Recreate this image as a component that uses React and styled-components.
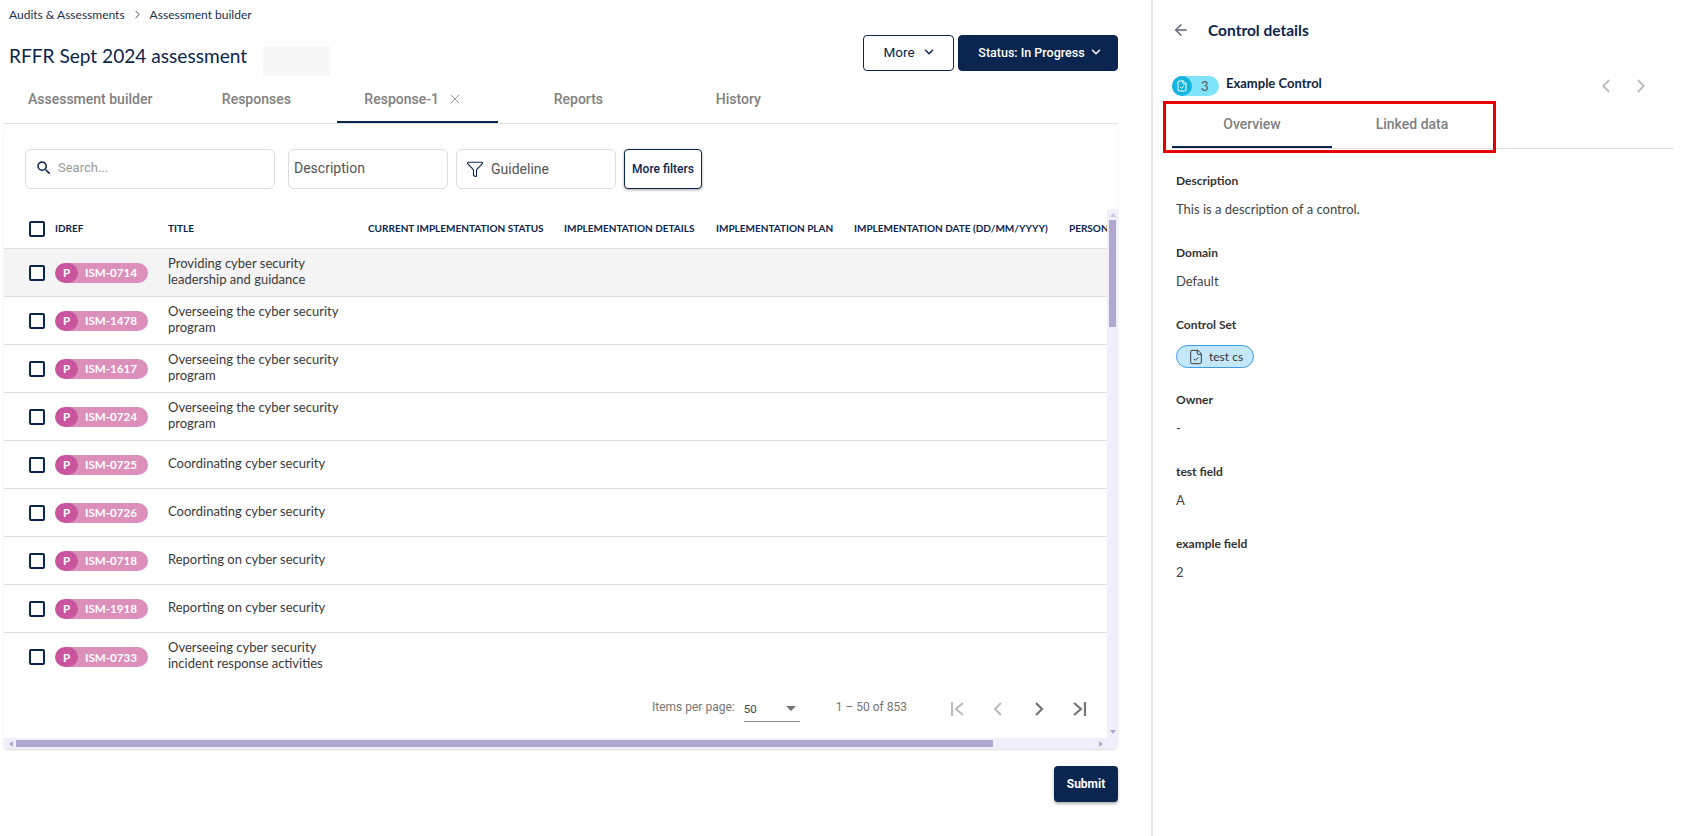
import React from "react";
import styled, { createGlobalStyle } from "styled-components";
import { ChevronRight, ChevronLeft, ChevronDown, X, ArrowLeft, Funnel, FileCheck } from "lucide-react";

const navy = "#0a2550";

const Global = createGlobalStyle`
  html, body { margin: 0; padding: 0; height: 100%; background: #fff; overflow: hidden; }
  body { font-family: Lato, "Liberation Sans", sans-serif; color: #333; }
  * { box-sizing: border-box; }
`;

const Page = styled.div`
  display: flex;
  width: 1689px;
  height: 836px;
  overflow: hidden;
`;
const Main = styled.main`
  width: 1151px;
  flex: none;
  padding: 0 33px 0 4px;
`;
const Breadcrumb = styled.nav`
  height: 28px;
  display: flex;
  align-items: center;
  gap: 6px;
  padding-left: 5px;
  font-size: 12px;
  color: #1c2f4f;
`;
const HeadRow = styled.div`
  height: 48px;
  display: flex;
  justify-content: space-between;
  align-items: flex-start;
`;
const TitleGroup = styled.div`
  display: flex;
  align-items: flex-start;
  gap: 16px;
  margin-top: 17px;
  padding-left: 5px;
`;
const Title = styled.h1`
  margin: 0;
  font-size: 19.1px;
  line-height: 22px;
  font-weight: 400;
  color: ${navy};
  white-space: nowrap;
`;
const Blank = styled.div`
  width: 67px;
  height: 30px;
  margin-top: 1px;
  background: #f7f7f7;
`;
const Actions = styled.div`
  display: flex;
  gap: 4px;
  margin-top: 7px;
`;
const HeadButton = styled.button`
  height: 36px;
  width: ${(p) => p.$w}px;
  display: flex;
  align-items: center;
  justify-content: center;
  gap: ${(p) => (p.$primary ? 4 : 7)}px;
  border: 1px solid ${navy};
  border-radius: 4px;
  background: ${(p) => (p.$primary ? navy : "#fff")};
  color: ${(p) => (p.$primary ? "#fff" : navy)};
  font-family: Roboto, sans-serif;
  font-size: ${(p) => (p.$primary ? 12.5 : 13.5)}px;
  font-weight: ${(p) => (p.$primary ? 500 : 400)};
  padding: 0 0 2px ${(p) => (p.$primary ? 5 : 2)}px;
`;
const TabBar = styled.div`
  display: flex;
  height: 48px;
  border-bottom: 1px solid #e0e0e0;
`;
const Tab = styled.div`
  min-width: ${(p) => p.$w || 160}px;
  height: 100%;
  padding: 0 24px 0 ${(p) => p.$pl || 24}px;
  margin-right: ${(p) => p.$mr || 0}px;
  display: flex;
  align-items: center;
  justify-content: ${(p) => (p.$start ? "flex-start" : "center")};
  gap: 8px;
  font-family: Roboto, sans-serif;
  font-size: 14px;
  font-weight: 500;
  color: #808080;
  white-space: nowrap;
  border-bottom: 2px solid ${(p) => (p.$active ? navy : "transparent")};
  margin-bottom: -1px;
`;
const Card = styled.section`
  margin-top: 4px;
  height: 621px;
  display: flex;
  flex-direction: column;
  border-radius: 4px;
  box-shadow: 0 1px 2px rgba(0, 0, 0, 0.14);
  overflow: hidden;
  background: #fff;
`;
const Toolbar = styled.div`
  flex: none;
  height: 81px;
  padding: 21px 0 0 21px;
  display: flex;
  gap: 8px;
`;
const Field = styled.div`
  width: ${(p) => p.$w}px;
  height: 40px;
  margin-right: ${(p) => p.$mr || 0}px;
  display: flex;
  align-items: center;
  gap: ${(p) => p.$gap || 0}px;
  padding-left: ${(p) => p.$pl}px;
  padding-bottom: ${(p) => p.$pb || 0}px;
  border: 1px solid #dcdcdc;
  border-radius: 6px;
  font-family: Roboto, sans-serif;
  font-size: ${(p) => p.$fs || 14}px;
  color: ${(p) => p.$color || "#555"};
`;
const FilterButton = styled.button`
  width: 78px;
  height: 40px;
  padding: 0;
  border: 1px solid ${navy};
  border-radius: 4px;
  background: #fff;
  color: ${navy};
  font-family: Roboto, sans-serif;
  font-size: 12px;
  font-weight: 500;
  box-shadow: 0 1px 3px rgba(0, 0, 0, 0.35);
`;
const TableArea = styled.div`
  flex: 1;
  min-height: 0;
  display: flex;
`;
const TableColumn = styled.div`
  flex: 1;
  min-width: 0;
  overflow: hidden;
`;
const Row = styled.div`
  display: grid;
  grid-template-columns: 51px 113px 200px 196px 152px 138px 215px 200px;
  align-items: center;
  height: ${(p) => p.$h || 48}px;
  border-bottom: 1px solid #e0e0e0;
  background: ${(p) => (p.$hl ? "#f4f4f4" : "#fff")};
  ${(p) => (p.$last ? "border-bottom: 0;" : "")}
`;
const HeadCell = styled.div`
  font-size: 10px;
  font-weight: 700;
  color: ${navy};
  white-space: nowrap;
  overflow: hidden;
  padding-bottom: 2px;
`;
const CheckCell = styled.div`
  padding-left: 25px;
  display: flex;
`;
const Check = styled.span`
  width: 16px;
  height: 16px;
  border: 2px solid ${navy};
  border-radius: 2px;
  background: #fff;
`;
const IdPill = styled.span`
  width: 93px;
  height: 20px;
  display: flex;
  align-items: center;
  border-radius: 10px;
  background: #dc8fbb;
  color: #fff;
  font-size: 11.6px;
  font-weight: 700;
  overflow: hidden;
`;
const IdDot = styled.span`
  width: 23px;
  height: 20px;
  margin-right: 7px;
  border-radius: 10px;
  background: #c9559e;
  display: flex;
  align-items: center;
  justify-content: center;
`;
const RowTitle = styled.div`
  font-size: 13px;
  line-height: 16px;
  color: #3a3a3a;
  padding-bottom: 4px;
`;
const Pagination = styled.div`
  height: 55px;
  display: flex;
  align-items: center;
  padding: 0 0 3px 648px;
  font-family: Roboto, sans-serif;
  font-size: 12px;
  color: #757575;
`;
const PageSize = styled.div`
  width: 56px;
  height: 26px;
  margin: 4px 36px 0 9px;
  display: flex;
  align-items: center;
  justify-content: space-between;
  padding-right: 4px;
  border-bottom: 1px solid #8c8c8c;
  color: #444;
  font-size: 11.5px;
`;
const Caret = styled.span`
  width: 0;
  height: 0;
  border-left: 5px solid transparent;
  border-right: 5px solid transparent;
  border-top: 5px solid #757575;
`;
const Range = styled.span`
  width: 109px;
  flex: none;
`;
const PageButtons = styled.div`
  display: flex;
  align-items: center;
  gap: 17px;
  margin-top: 4px;
`;
const VBar = styled.div`
  position: relative;
  flex: none;
  width: 11px;
  height: 529px;
  align-self: flex-end;
  background: #f1effb;
`;
const VThumb = styled.div`
  width: 7px;
  height: 107px;
  margin: 11px 0 0 2px;
  background: #b0a8d0;
`;
const ScrollArrow = styled.span`
  position: absolute;
  width: 0;
  height: 0;
  ${(p) => p.$css}
`;
const HBar = styled.div`
  position: relative;
  flex: none;
  height: 11px;
  padding: 2px 125px 2px 12px;
  background: #f1effb;
`;
const HThumb = styled.div`
  height: 7px;
  background: #b0a8d0;
`;
const Footer = styled.div`
  display: flex;
  justify-content: flex-end;
  margin-top: 17px;
`;
const Submit = styled.button`
  width: 64px;
  height: 36px;
  padding: 0;
  border: 0;
  border-radius: 4px;
  background: ${navy};
  color: #fff;
  font-family: Roboto, sans-serif;
  font-size: 12px;
  font-weight: 700;
  box-shadow: 0 2px 3px rgba(0, 0, 0, 0.3);
`;
const Side = styled.aside`
  flex: 1;
  border-left: 2px solid #e6e6e6;
  padding: 0 15px 0 19px;
`;
const SideHead = styled.div`
  height: 60px;
  display: flex;
  align-items: center;
  gap: 18px;
`;
const SideTitle = styled.h2`
  margin: 0;
  font-size: 15.5px;
  font-weight: 700;
  color: ${navy};
`;
const ControlRow = styled.div`
  height: 41px;
  display: flex;
  align-items: center;
  padding: 10px 22px 0 0;
`;
const ControlBadge = styled.span`
  width: 47px;
  height: 20px;
  display: flex;
  align-items: center;
  border-radius: 10px;
  background: #7ee3fb;
  font-size: 13px;
  color: #555;
`;
const ControlDot = styled.span`
  width: 20px;
  height: 20px;
  margin-right: 9px;
  border-radius: 10px;
  background: #14b5dd;
  display: flex;
  align-items: center;
  justify-content: center;
`;
const ControlName = styled.span`
  margin: -6px auto 0 7px;
  font-size: 13px;
  font-weight: 700;
  color: #14253f;
`;
const ControlNav = styled.div`
  display: flex;
  gap: 13px;
`;
const TabsFrame = styled.div`
  position: relative;
`;
const RedBox = styled.div`
  position: absolute;
  left: -9px;
  top: 0;
  width: 333px;
  height: 52px;
  border: 3px solid #e60000;
  pointer-events: none;
`;
const Details = styled.div`
  padding: 24px 0 0 4px;
  display: flex;
  flex-direction: column;
  gap: 28px;
`;
const Block = styled.div`
  display: flex;
  flex-direction: column;
  align-items: flex-start;
  gap: 12px;
  ${(p) => (p.$chip ? "margin-bottom: -4px;" : "")}
`;
const Label = styled.div`
  font-size: 12px;
  line-height: 16px;
  font-weight: 700;
  color: #333;
`;
const Value = styled.div`
  font-size: 13px;
  line-height: 16px;
  color: #444;
`;
const Chip = styled.span`
  width: 78px;
  height: 23px;
  display: flex;
  align-items: center;
  gap: 5px;
  padding-left: 11px;
  border: 1px solid #3d9be0;
  border-radius: 12px;
  background: #c4e8fa;
  font-size: 12px;
  color: #333;
`;

const SearchIcon = () => (
  <svg width="18" height="18" viewBox="0 0 24 24" fill={navy}>
    <path d="M15.5 14h-.79l-.28-.27A6.471 6.471 0 0 0 16 9.5 6.5 6.5 0 1 0 9.5 16c1.61 0 3.09-.59 4.23-1.57l.27.28v.79l5 4.99L20.49 19l-4.99-5zm-6 0C7.01 14 5 11.99 5 9.5S7.01 5 9.5 5 14 7.01 14 9.5 11.99 14 9.5 14z" />
  </svg>
);
const PageIcon = ({ d, bar, color }) => (
  <svg width="24" height="24" viewBox="0 0 24 24" fill="none" stroke={color} strokeWidth="2.2">
    <path d={d} />
    {bar && <path d={bar} />}
  </svg>
);

const rows = [
  ["ISM-0714", ["Providing cyber security", "leadership and guidance"]],
  ["ISM-1478", ["Overseeing the cyber security", "program"]],
  ["ISM-1617", ["Overseeing the cyber security", "program"]],
  ["ISM-0724", ["Overseeing the cyber security", "program"]],
  ["ISM-0725", ["Coordinating cyber security"]],
  ["ISM-0726", ["Coordinating cyber security"]],
  ["ISM-0718", ["Reporting on cyber security"]],
  ["ISM-1918", ["Reporting on cyber security"]],
  ["ISM-0733", ["Overseeing cyber security", "incident response activities"]],
];
const columns = ["IDREF", "TITLE", "CURRENT IMPLEMENTATION STATUS", "IMPLEMENTATION DETAILS", "IMPLEMENTATION PLAN", "IMPLEMENTATION DATE (DD/MM/YYYY)", "PERSON RESPONSIBLE"];
const details = [["Description", "This is a description of a control."], ["Domain", "Default"]];
const details2 = [["Owner", "-"], ["test field", "A"], ["example field", "2"]];

export default function App() {
  return (
    <Page>
      <Global />
      <Main>
        <Breadcrumb>
          <span>Audits &amp; Assessments</span>
          <ChevronRight size={13} strokeWidth={1.6} color="#333" />
          <span>Assessment builder</span>
        </Breadcrumb>
        <HeadRow>
          <TitleGroup>
            <Title>RFFR Sept 2024 assessment</Title>
            <Blank />
          </TitleGroup>
          <Actions>
            <HeadButton $w={91}>
              More <ChevronDown size={14} strokeWidth={2.5} />
            </HeadButton>
            <HeadButton $w={160} $primary>
              Status: In Progress <ChevronDown size={14} strokeWidth={2.5} />
            </HeadButton>
          </Actions>
        </HeadRow>
        <TabBar>
          <Tab>Assessment builder</Tab>
          <Tab $mr={1}>Responses</Tab>
          <Tab $active $start $w={161} $pl={27}>
            Response-1 <X size={16} strokeWidth={1.2} />
          </Tab>
          <Tab>Reports</Tab>
          <Tab>History</Tab>
        </TabBar>
        <Card>
          <Toolbar>
            <Field $w={250} $mr={5} $pl={9} $gap={5} $fs={13} $pb={3} $color="#9a9a9a">
              <SearchIcon /> Search...
            </Field>
            <Field $w={160} $pl={5} $pb={3}>Description</Field>
            <Field $w={160} $pl={9} $gap={7}>
              <Funnel size={18} strokeWidth={1.5} color={navy} /> Guideline
            </Field>
            <FilterButton>More filters</FilterButton>
          </Toolbar>
          <TableArea>
            <TableColumn>
              <Row $h={40}>
                <CheckCell><Check /></CheckCell>
                {columns.map((c) => <HeadCell key={c}>{c}</HeadCell>)}
              </Row>
              {rows.map(([id, lines], i) => (
                <Row key={id} $hl={i === 0} $last={i === rows.length - 1}>
                  <CheckCell><Check /></CheckCell>
                  <IdPill><IdDot>P</IdDot>{id}</IdPill>
                  <RowTitle>{lines.map((l) => <div key={l}>{l}</div>)}</RowTitle>
                </Row>
              ))}
              <Pagination>
                Items per page:
                <PageSize>50<Caret /></PageSize>
                <Range>1 – 50 of 853</Range>
                <PageButtons>
                  <PageIcon d="M18 6l-7 6 7 6" bar="M7 5v14" color="#bdbdbd" />
                  <PageIcon d="M15 6l-6 6 6 6" color="#bdbdbd" />
                  <PageIcon d="M9 6l6 6-6 6" color="#757575" />
                  <PageIcon d="M6 6l7 6-7 6" bar="M17 5v14" color="#757575" />
                </PageButtons>
              </Pagination>
            </TableColumn>
            <VBar>
              <ScrollArrow $css="top: 4px; left: 3px; border: 3px solid transparent; border-top: 0; border-bottom: 4px solid #c9c4e4;" />
              <VThumb />
              <ScrollArrow $css="bottom: 4px; left: 3px; border: 3px solid transparent; border-bottom: 0; border-top: 4px solid #b0a8d0;" />
            </VBar>
          </TableArea>
          <HBar>
            <ScrollArrow $css="left: 5px; top: 3px; border: 3px solid transparent; border-left: 0; border-right: 4px solid #b0a8d0;" />
            <HThumb />
            <ScrollArrow $css="right: 15px; top: 3px; border: 3px solid transparent; border-right: 0; border-left: 4px solid #b0a8d0;" />
          </HBar>
        </Card>
        <Footer>
          <Submit>Submit</Submit>
        </Footer>
      </Main>
      <Side>
        <SideHead>
          <ArrowLeft size={18} color="#5a6378" strokeWidth={1.8} />
          <SideTitle>Control details</SideTitle>
        </SideHead>
        <ControlRow>
          <ControlBadge>
            <ControlDot><FileCheck size={12} color="#fff" strokeWidth={2} /></ControlDot>
            3
          </ControlBadge>
          <ControlName>Example Control</ControlName>
          <ControlNav>
            <ChevronLeft size={22} color="#bdbdbd" />
            <ChevronRight size={22} color="#bdbdbd" />
          </ControlNav>
        </ControlRow>
        <TabsFrame>
          <TabBar>
            <Tab $active>Overview</Tab>
            <Tab>Linked data</Tab>
          </TabBar>
          <RedBox />
        </TabsFrame>
        <Details>
          {details.map(([l, v]) => (
            <Block key={l}><Label>{l}</Label><Value>{v}</Value></Block>
          ))}
          <Block $chip>
            <Label>Control Set</Label>
            <Chip><FileCheck size={16} strokeWidth={1.3} color="#222" /> test cs</Chip>
          </Block>
          {details2.map(([l, v]) => (
            <Block key={l}><Label>{l}</Label><Value>{v}</Value></Block>
          ))}
        </Details>
      </Side>
    </Page>
  );
}
